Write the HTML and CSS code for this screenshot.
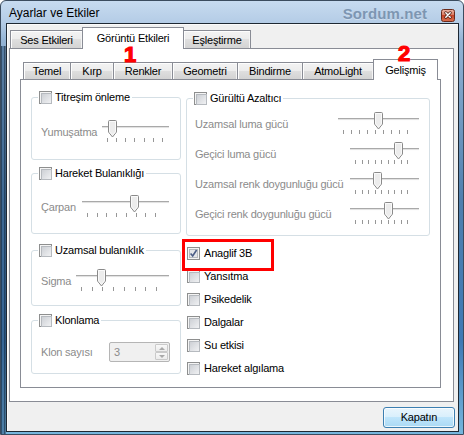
FILE: index.html
```html
<!DOCTYPE html>
<html lang="tr">
<head>
<meta charset="utf-8">
<title>Ayarlar ve Etkiler</title>
<link rel="stylesheet" href="styles.css">
</head>
<body>
<div class="window">
  <div class="titlebar">
    <span class="title">Ayarlar ve Etkiler</span>
    <span class="brand">Sordum.net</span>
    <span class="close">
      <svg width="14" height="13" viewBox="0 0 14 13">
        <defs>
          <linearGradient id="cg" x1="0" y1="0" x2="0" y2="1">
            <stop offset="0" stop-color="#ecb7a8"/>
            <stop offset=".45" stop-color="#d97a60"/>
            <stop offset=".5" stop-color="#c6452a"/>
            <stop offset="1" stop-color="#d9714f"/>
          </linearGradient>
        </defs>
        <rect x=".5" y=".5" width="13" height="12" rx="2" fill="url(#cg)" stroke="#6a2a1b"/>
        <path d="M4.8 3.8l4.4 4.4m0-4.4l-4.4 4.4" stroke="#4a1c12" stroke-width="3" stroke-linecap="round"/>
        <path d="M4.8 3.8l4.4 4.4m0-4.4l-4.4 4.4" stroke="#fff" stroke-width="1.5" stroke-linecap="round"/>
      </svg>
    </span>
  </div>

  <div class="client">
    <div class="tabs outer-tabs">
      <div class="tab">Ses Etkileri</div>
      <div class="tab sel">Görüntü Etkileri</div>
      <div class="tab">Eşleştirme</div>
    </div>

    <div class="panel outer-panel">
      <div class="tabs inner-tabs">
        <div class="tab">Temel</div>
        <div class="tab">Kırp</div>
        <div class="tab">Renkler</div>
        <div class="tab">Geometri</div>
        <div class="tab">Bindirme</div>
        <div class="tab">AtmoLight</div>
        <div class="tab sel">Gelişmiş</div>
      </div>

      <div class="panel inner-panel">
        <div class="col col-left">
          <div class="group g1">
            <div class="legend"><span class="cb"></span><span>Titreşim önleme</span></div>
            <div class="row">
              <span class="lbl">Yumuşatma</span>
              <div class="slider sl-a">
                <div class="track"></div>
                <div class="ticks"><i></i><i></i><i></i><i></i><i></i><i></i><i></i></div>
                <svg class="thumb" style="left:6px" width="9" height="18" viewBox="0 0 9 18"><path d="M1.5.5h6a1 1 0 0 1 1 1v10.5l-4 5-4-5V1.5a1 1 0 0 1 1-1z" fill="#ececec" stroke="#8a8a8a"/><path d="M1.5 1.5h6v10.2l-3 3.7-3-3.7z" fill="none" stroke="#fafafa"/></svg>
              </div>
            </div>
          </div>

          <div class="group g2">
            <div class="legend"><span class="cb"></span><span>Hareket Bulanıklığı</span></div>
            <div class="row">
              <span class="lbl">Çarpan</span>
              <div class="slider sl-b">
                <div class="track"></div>
                <div class="ticks"><i></i><i></i><i></i><i></i><i></i><i></i><i></i><i></i></div>
                <svg class="thumb" style="left:48px" width="9" height="18" viewBox="0 0 9 18"><path d="M1.5.5h6a1 1 0 0 1 1 1v10.5l-4 5-4-5V1.5a1 1 0 0 1 1-1z" fill="#ececec" stroke="#8a8a8a"/><path d="M1.5 1.5h6v10.2l-3 3.7-3-3.7z" fill="none" stroke="#fafafa"/></svg>
              </div>
            </div>
          </div>

          <div class="group g3">
            <div class="legend"><span class="cb"></span><span>Uzamsal bulanıklık</span></div>
            <div class="row">
              <span class="lbl">Sigma</span>
              <div class="slider sl-c">
                <div class="track"></div>
                <div class="ticks"><i></i><i></i><i></i><i></i><i></i><i></i><i></i><i></i></div>
                <svg class="thumb" style="left:21px" width="9" height="18" viewBox="0 0 9 18"><path d="M1.5.5h6a1 1 0 0 1 1 1v10.5l-4 5-4-5V1.5a1 1 0 0 1 1-1z" fill="#ececec" stroke="#8a8a8a"/><path d="M1.5 1.5h6v10.2l-3 3.7-3-3.7z" fill="none" stroke="#fafafa"/></svg>
              </div>
            </div>
          </div>

          <div class="group g4">
            <div class="legend"><span class="cb"></span><span>Klonlama</span></div>
            <div class="row spin-row">
              <span class="lbl">Klon sayısı</span>
              <div class="spin">
                <span>3</span>
                <span class="spin-btns"><span class="sb up"></span><span class="sb down"></span></span>
              </div>
            </div>
          </div>
        </div>

        <div class="col col-right">
          <div class="group g-right">
            <div class="legend"><span class="cb"></span><span>Gürültü Azaltıcı</span></div>
            <div class="row first">
              <span class="lbl">Uzamsal luma gücü</span>
              <div class="slider sl-d">
                <div class="track"></div>
                <div class="ticks"><i></i><i></i><i></i><i></i><i></i><i></i><i></i><i></i><i></i></div>
                <svg class="thumb" style="left:36px" width="9" height="18" viewBox="0 0 9 18"><path d="M1.5.5h6a1 1 0 0 1 1 1v10.5l-4 5-4-5V1.5a1 1 0 0 1 1-1z" fill="#ececec" stroke="#8a8a8a"/><path d="M1.5 1.5h6v10.2l-3 3.7-3-3.7z" fill="none" stroke="#fafafa"/></svg>
              </div>
            </div>
            <div class="row">
              <span class="lbl">Geçici luma gücü</span>
              <div class="slider sl-e">
                <div class="track"></div>
                <div class="ticks"><i></i><i></i><i></i><i></i><i></i><i></i><i></i><i></i><i></i></div>
                <svg class="thumb" style="left:44px" width="9" height="18" viewBox="0 0 9 18"><path d="M1.5.5h6a1 1 0 0 1 1 1v10.5l-4 5-4-5V1.5a1 1 0 0 1 1-1z" fill="#ececec" stroke="#8a8a8a"/><path d="M1.5 1.5h6v10.2l-3 3.7-3-3.7z" fill="none" stroke="#fafafa"/></svg>
              </div>
            </div>
            <div class="row">
              <span class="lbl">Uzamsal renk doygunluğu gücü</span>
              <div class="slider sl-e">
                <div class="track"></div>
                <div class="ticks"><i></i><i></i><i></i><i></i><i></i><i></i><i></i><i></i><i></i></div>
                <svg class="thumb" style="left:23px" width="9" height="18" viewBox="0 0 9 18"><path d="M1.5.5h6a1 1 0 0 1 1 1v10.5l-4 5-4-5V1.5a1 1 0 0 1 1-1z" fill="#ececec" stroke="#8a8a8a"/><path d="M1.5 1.5h6v10.2l-3 3.7-3-3.7z" fill="none" stroke="#fafafa"/></svg>
              </div>
            </div>
            <div class="row">
              <span class="lbl">Geçici renk doygunluğu gücü</span>
              <div class="slider sl-e">
                <div class="track"></div>
                <div class="ticks"><i></i><i></i><i></i><i></i><i></i><i></i><i></i><i></i><i></i></div>
                <svg class="thumb" style="left:34px" width="9" height="18" viewBox="0 0 9 18"><path d="M1.5.5h6a1 1 0 0 1 1 1v10.5l-4 5-4-5V1.5a1 1 0 0 1 1-1z" fill="#ececec" stroke="#8a8a8a"/><path d="M1.5 1.5h6v10.2l-3 3.7-3-3.7z" fill="none" stroke="#fafafa"/></svg>
              </div>
            </div>
          </div>

          <ul class="checklist">
            <li class="item hl">
              <span class="cb on"><svg width="9" height="9" viewBox="0 0 9 9"><rect x=".5" y=".5" width="8" height="8" fill="#e4e6e9" stroke="#b6babf"/><path d="M1.6 4.4l2.1 2.6 3.9-6" fill="none" stroke="#4b5d86" stroke-width="1.6"/></svg></span>
              <span>Anaglif 3B</span>
            </li>
            <li class="item"><span class="cb"></span><span>Yansıtma</span></li>
            <li class="item"><span class="cb"></span><span>Psikedelik</span></li>
            <li class="item"><span class="cb"></span><span>Dalgalar</span></li>
            <li class="item"><span class="cb"></span><span>Su etkisi</span></li>
            <li class="item"><span class="cb"></span><span>Hareket algılama</span></li>
          </ul>
        </div>
      </div>

      <span class="mark m1">1</span>
      <span class="mark m2">2</span>
    </div>

    <div class="footer">
      <button class="btn" type="button">Kapatın</button>
    </div>
  </div>
</div>
</body>
</html>
```

FILE: styles.css
```css
* { box-sizing: border-box; }
html, body { margin: 0; padding: 0; }
body {
  width: 464px;
  height: 435px;
  overflow: hidden;
  font: 11px/13px "Liberation Sans", Arial, sans-serif;
  letter-spacing: -0.2px;
  color: #000;
}

.window {
  width: 464px;
  height: 435px;
  border: 1px solid #3b4c5f;
  border-radius: 6px 6px 0 0;
  display: flex;
  flex-direction: column;
  background:
    linear-gradient(90deg, rgba(10, 28, 48, .8) 0, rgba(70, 120, 170, .5) 2px, rgba(10, 28, 48, .8) 4px, transparent 5px) 0 45px / 100% 100% no-repeat,
    linear-gradient(#c7dbf0 0, #b4cce6 22px, #93b3d4 40px, #4f7fae 200px, #3f79b4 340px, #76b6dd 100%);
}

/* title bar */
.titlebar {
  height: 22px;
  flex: none;
  display: flex;
  align-items: flex-start;
  padding: 0 8px;
}
.title {
  font-size: 12px;
  line-height: 14px;
  margin-top: 5px;
  letter-spacing: 0;
  color: #000;
}
.brand {
  margin-left: auto;
  margin-top: 4px;
  font-weight: bold;
  font-size: 15px;
  line-height: 17px;
  letter-spacing: 0.1px;
  color: #7d96b2;
  text-shadow: 0 1px 0 rgba(255, 255, 255, .35);
}
.close {
  display: flex;
  margin-left: 14px;
  margin-top: 8px;
}

/* client area */
.client {
  flex: 1;
  margin: 0 4px 2px 5px;
  border: 1px solid #1e2833;
  box-shadow: inset 1px 1px 0 #fbfbfb;
  background: #f0f0f0;
  padding: 3px 3px 3px 2px;
  display: flex;
  flex-direction: column;
}

/* tabs */
.tabs {
  display: flex;
  align-items: flex-end;
  position: relative;
  z-index: 1;
  flex: none;
}
.tab {
  flex: none;
  border: 1px solid #898c95;
  border-bottom: 0;
  background: linear-gradient(#f3f3f3, #ececec 50%, #dfdfdf 50%, #d3d3d3);
  box-shadow: inset 1px 1px 0 #fdfdfd, inset -1px 0 0 #f4f4f4;
  text-align: center;
  line-height: 16px;
  white-space: nowrap;
  color: #000;
}
.tab + .tab { margin-left: -1px; }
.tab.sel {
  background: #fff;
  box-shadow: none;
  margin-bottom: -1px;
  padding-top: 2px;
  position: relative;
  z-index: 1;
}

.outer-tabs { padding-left: 1px; }
.outer-tabs .tab { height: 18px; padding-top: 1px; }
.outer-tabs .tab.sel { height: 22px; padding-top: 2px; }
.outer-tabs .tab:nth-child(1) { width: 73px; }
.outer-tabs .tab:nth-child(2) { width: 102px; }
.outer-tabs .tab:nth-child(3) { width: 68px; }

.inner-tabs { padding-left: 3px; }
.inner-tabs .tab { height: 17px; padding-top: 0; }
.inner-tabs .tab.sel { height: 21px; padding-top: 2px; }
.inner-tabs .tab:nth-child(1) { width: 48px; }
.inner-tabs .tab:nth-child(2) { width: 44px; }
.inner-tabs .tab:nth-child(3) { width: 60px; }
.inner-tabs .tab:nth-child(4) { width: 66px; }
.inner-tabs .tab:nth-child(5) { width: 66px; }
.inner-tabs .tab:nth-child(6) { width: 72px; }
.inner-tabs .tab:nth-child(7) { width: 65px; }

/* panels */
.panel {
  border: 1px solid #898c95;
  background: #fff;
}
.outer-panel {
  height: 354px;
  flex: none;
  margin-right: 1px;
  padding: 10px 12px 13px 10px;
  display: flex;
  flex-direction: column;
  position: relative;
}
.inner-panel {
  flex: 1;
  padding: 11px 10px 0 10px;
  display: flex;
  gap: 5px;
}
.col { display: flex; flex-direction: column; }
.col-left { width: 150px; }
.col-right { width: 244px; }

/* group boxes */
.group {
  border: 1px solid #d5dfe5;
  border-radius: 3px;
  padding: 0 11px 0 8px;
  flex: none;
}
.legend {
  display: flex;
  align-items: center;
  gap: 3px;
  width: max-content;
  height: 13px;
  line-height: 13px;
  margin: -7px 0 0 -2px;
  padding: 0 2px 0 1px;
  background: #fff;
  color: #000;
}
.g1 { margin-top: 6px; height: 63px; }
.g1 .row { margin-top: 16px; }
.g2 { margin-top: 13px; height: 61px; }
.g2 .row { margin-top: 15px; }
.g3 { margin-top: 16px; height: 56px; }
.g3 .row { margin-top: 12px; }
.g4 { margin-top: 14px; height: 54px; }
.g4 .row { margin-top: 15px; }
.g-right { margin-top: 7px; height: 138px; padding-right: 10px; }
.g-right .row { margin-top: 6px; }
.g-right .row.first { margin-top: 7px; }

.row {
  display: flex;
  justify-content: space-between;
  align-items: flex-start;
}
.col-left .row { padding-left: 1px; }
.lbl {
  color: #8b8b8b;
  margin-top: 6px;
  line-height: 13px;
  white-space: nowrap;
}

/* checkbox */
.cb {
  display: block;
  flex: none;
  width: 13px;
  height: 13px;
  border: 1px solid #8e8f8f;
  background: #f4f4f4;
  padding: 1px;
}
.cb::before {
  content: "";
  display: block;
  width: 9px;
  height: 9px;
  border: 1px solid #b6babf;
  background: linear-gradient(135deg, #cdd0d5, #f0f1f3);
}
.cb.on::before { display: none; }
.cb.on svg { display: block; }

/* sliders */
.slider {
  position: relative;
  height: 24px;
  flex: none;
}
.track {
  height: 3px;
  margin-top: 6px;
  border-top: 1px solid #a9a9a9;
  border-bottom: 1px solid #fdfdfd;
  background: #e2e2e2;
}
.ticks {
  display: flex;
  justify-content: space-between;
  height: 4px;
  margin-top: 9px;
  margin-left: 5px;
}
.ticks i {
  display: block;
  width: 1px;
  background: #979797;
}
.thumb {
  position: absolute;
  top: 0;
  display: block;
}
.sl-a { width: 67px; }
.sl-a .ticks { width: 56px; }
.sl-b { width: 87px; }
.sl-b .ticks { width: 69px; }
.sl-c { width: 93px; }
.sl-c .ticks { width: 76px; }
.sl-d { width: 81px; }
.sl-d .ticks { width: 65px; }
.sl-e { width: 69px; }
.sl-e .ticks { width: 53px; }

/* spin box */
.spin-row { align-items: center; }
.spin-row .lbl { margin-top: 0; }
.spin {
  width: 61px;
  height: 20px;
  margin-right: -1px;
  border: 1px solid #b5b5b5;
  border-radius: 2px;
  background: #f0f0f0;
  display: flex;
  align-items: center;
  padding: 0 1px 0 4px;
  color: #8b8b8b;
}
.spin-btns {
  margin-left: auto;
  width: 13px;
  height: 16px;
  display: flex;
  flex-direction: column;
}
.sb {
  flex: 1;
  border: 1px solid #cacaca;
  border-radius: 1px;
  background: linear-gradient(#f8f8f8, #ececec);
  display: flex;
  align-items: center;
  justify-content: center;
}
.sb::before {
  content: "";
  width: 0;
  height: 0;
  border-left: 3px solid transparent;
  border-right: 3px solid transparent;
}
.sb.up::before { border-bottom: 3px solid #a9a9a9; }
.sb.down::before { border-top: 3px solid #a9a9a9; }

/* check list */
.checklist {
  list-style: none;
  margin: 11px 0 0;
  padding: 0 0 0 1px;
  display: flex;
  flex-direction: column;
  gap: 10px;
}
.item {
  display: flex;
  align-items: center;
  gap: 4px;
  height: 13px;
  line-height: 13px;
  color: #000;
}
.hl { position: relative; }
.hl::after {
  content: "";
  position: absolute;
  left: -5px;
  top: -8px;
  width: 86px;
  height: 26px;
  border: 3px solid #ff0000;
}

/* red step numbers */
.mark {
  position: absolute;
  z-index: 3;
  font: bold 22px/12px "Liberation Sans", Arial, sans-serif;
  height: 12px;
  letter-spacing: 0;
  color: #ff0000;
  -webkit-text-stroke: 1.2px #ff0000;
}
.m1 { left: 114px; top: 0; }
.m2 { left: 388px; top: -1px; }

/* footer */
.footer {
  flex: none;
  display: flex;
  justify-content: flex-end;
  margin-top: 5px;
}
.btn {
  width: 72px;
  height: 21px;
  padding: 0;
  border: 1px solid #3c7fb1;
  border-radius: 3px;
  background: linear-gradient(#e9f5fd, #d8effc 50%, #bfe5fb 50%, #aad9f4);
  box-shadow: inset 0 0 0 1px rgba(255, 255, 255, .75);
  font: 11px/13px "Liberation Sans", Arial, sans-serif;
  letter-spacing: -0.2px;
  color: #000;
}
```
